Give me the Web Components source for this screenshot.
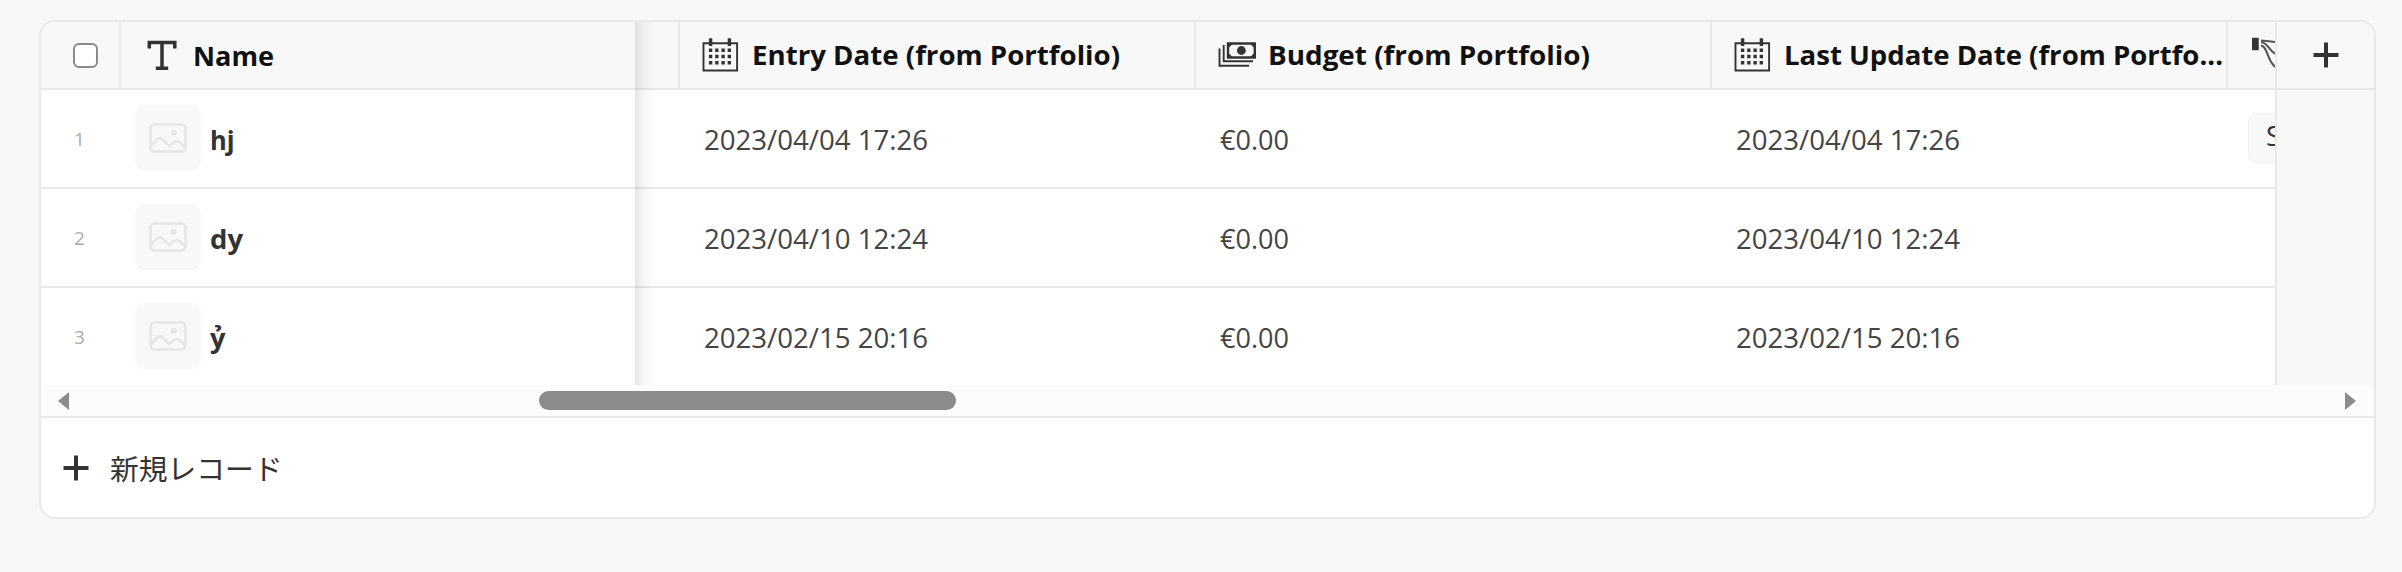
<!DOCTYPE html>
<html lang="ja"><head><meta charset="utf-8"><title>Records</title>
<style>
body{margin:0;width:2402px;height:572px;overflow:hidden;background:#f8f8f8;font-family:"Open Sans","Noto Sans","Noto Sans CJK JP",sans-serif;color:#333}
</style></head><body>
<data-grid></data-grid>
<script>
const ICONS={
text:'<svg width="38" height="36" viewBox="0 0 38 36"><path d="M6.300 11.500V5.400h25.500v6.100M19 5.400V31M12.800 31.200H25.200" fill="none" stroke="#333" stroke-width="3.500"/></svg>',
cal:'<svg width="38" height="36" viewBox="0 0 38 36"><path d="M1.500 6.300h33.600v27.200H1.500z" fill="none" stroke="#333" stroke-width="1.900"/><path d="M8.600 1.200v7.800M27.400 1.200v7.800" stroke="#333" stroke-width="3.400"/><path d="M6.900 13.200h24M6.900 19.500h24M6.900 25.800h24" stroke="#333" stroke-width="3.400" stroke-dasharray="3.400 2.850"/></svg>',
money:'<svg width="38" height="36" viewBox="0 0 38 36"><path d="M10 6.500h26.800v14H10z" fill="none" stroke="#333" stroke-width="2.400"/><path d="M9.500 6h6l-6 6zM37.300 6h-6l6 6zM9.500 21v-6l6 6zM37.300 21v-6l-6 6z" fill="#333"/><circle cx="23.400" cy="13.500" r="4.400" fill="#333"/><path d="M5.700 8v16.300H35M1.500 11.500v17.300H31" fill="none" stroke="#333" stroke-width="1.900"/></svg>',
lookup:'<svg width="38" height="36" viewBox="0 0 38 36"><path d="M2 .8h6.700v12.500H2z" fill="#333"/><path d="M11 3.500c5 .2 9 1.500 20 1.700M11 5.300c7 0 8 9 15 12M11 8.500c7 1 6 16 15 22" fill="none" stroke="#555" stroke-width="2.100"/></svg>',
plus:'<svg width="26" height="26" viewBox="0 0 26 26"><path d="M13 .5v25M.5 13h25" stroke="#333" stroke-width="4"/></svg>',
image:'<svg width="38" height="30" viewBox="0 0 38 30"><rect x="1.500" y="1.500" width="35" height="27" rx="4" fill="none" stroke="#e6e6e6" stroke-width="2.600"/><circle cx="24.700" cy="9.700" r="3" fill="#e6e6e6"/><path d="M2 23l6-6.500q3-2.500 6 .5l6.500 6 4.500-3.800q3-2 5.500 0l6 5.300" fill="none" stroke="#e6e6e6" stroke-width="2.600"/></svg>'};
class El extends HTMLElement{
 connectedCallback(){if(!this.shadowRoot){this.attachShadow({mode:'open'}).innerHTML=this.render()}this.ready&&this.ready()}
}
// Single-line label condensed or widened to the width of its column text.
customElements.define('fit-text',class extends El{
 render(){return `<style>:host{display:block;white-space:nowrap;width:${this.getAttribute('w')}px}span{display:inline-block;transform-origin:0 50%}</style><span><slot></slot></span>`}
 ready(){const s=this.shadowRoot.querySelector('span');s.style.transform=`scaleX(${this.getAttribute('w')/s.getBoundingClientRect().width})`}
});
customElements.define('grid-icon',class extends El{
 render(){return `<style>:host{display:block;flex:none}svg{display:block}</style>${ICONS[this.getAttribute('name')]}`}
});
customElements.define('head-cell',class extends El{
 render(){return `<style>:host{display:flex;align-items:center;box-sizing:border-box;height:66px;padding:0 0 0 22px;border-right:2px solid #e9e9e9;font:bold 27.500px/36px "Open Sans","Noto Sans",sans-serif;color:#111;overflow:hidden}grid-icon{margin-right:12px}</style><grid-icon name="${this.getAttribute('icon')}"></grid-icon><slot></slot>`}
});
customElements.define('value-cell',class extends El{
 render(){return `<style>:host{display:block;box-sizing:border-box;padding:32px 0 0 23.500px;font-size:27.500px;line-height:36px;color:#444}</style><slot></slot>`}
});
customElements.define('name-cell',class extends El{
 render(){return `<style>:host{display:flex;box-sizing:border-box;padding:15px 0 0 14px}.pic{width:66px;height:66px;border-radius:9px;background:#f8f8f8;display:grid;place-items:center}.pic grid-icon{margin-bottom:1px}b{margin:17px 0 0 9px;font-size:27.500px;line-height:36px;color:#333}</style><div class="pic"><grid-icon name="image"></grid-icon></div><b><slot></slot></b>`}
});
customElements.define('grid-scrollbar',class extends El{
 render(){return `<style>:host{display:flex;align-items:center;box-sizing:border-box;height:33px;padding:0 18px 0 17px;background:#fcfcfc;border-bottom:2px solid #e9e9e9}i{display:block;border:9.500px solid transparent;border-width:9.500px 0}.l{border-right:11px solid #8b8b8b}.r{border-left:11px solid #8b8b8b}.track{flex:1;padding-left:470px}.thumb{width:417px;height:19px;border-radius:10px;background:#8b8b8b}</style><i class="l"></i><div class="track"><div class="thumb"></div></div><i class="r"></i>`}
});
customElements.define('data-grid',class extends El{
 render(){const rows=[['hj','2023/04/04 17:26',24.5],['dy','2023/04/10 12:24',33],['ỷ','2023/02/15 20:16',15.5]];
 return `<style>
 :host{display:block;box-sizing:border-box;width:2337px;height:499px;margin:20px 0 0 39px;border:2px solid #e9e9e9;border-radius:16px;background:#fff;overflow:hidden}
 .body{display:flex;height:363px}
 .frozen{width:594px;flex:none}
 .view{position:relative;width:1640px;flex:none;overflow:hidden;border-right:2px solid #e9e9e9}
 .shade{position:absolute;inset:0 auto 0 0;width:22px;background:linear-gradient(90deg,rgba(0,0,0,.1),rgba(0,0,0,.045) 35%,rgba(0,0,0,.012) 70%,transparent)}
 .add{flex:1;background:#f8f8f8}
 .head{display:grid;background:#f8f8f8;border-bottom:2px solid #e9e9e9;height:66px;box-sizing:content-box}
 .row{display:grid;height:97px;border-bottom:2px solid #e9e9e9}.row:last-of-type{border-bottom:0}
 .frozen>*{grid-template-columns:80px 514px}
 .view>.head,.view>.row{grid-template-columns:45px 516px 516px 516px 300px}
 .check{border-right:2px solid #e9e9e9;padding:21px 0 0 32px;box-sizing:border-box}.check div{width:25px;height:25px;border:2px solid #8a8a8a;border-radius:6px;box-sizing:border-box;background:#fff}
 .title{display:flex;align-items:center;gap:12px;padding-left:22px;font-weight:bold;font-size:27.500px;color:#111}
 .num{font-size:19px;line-height:26px;color:#aaa;padding:36px 0 0 33px}
 .blank{border-right:2px solid #e9e9e9}
 .add .head{place-items:center}
 .chip{margin:23px 0 0 20px;width:180px;height:50px;box-sizing:border-box;border:1px solid #f1f1f1;background:#f8f8f8;border-radius:9px;padding:4px 17px;font-size:27.500px;line-height:36px;color:#333}
 .new{display:flex;align-items:center;gap:21px;padding-left:21.500px;height:99px;font:28.600px/40px "Noto Sans CJK JP",sans-serif;color:#333}
 </style>
 <div class="body"><div class="frozen"><div class="head"><div class="check"><div></div></div><div class="title"><grid-icon name="text"></grid-icon><fit-text w="81">Name</fit-text></div></div>
 ${rows.map((r,i)=>`<div class="row"><div class="num">${i+1}</div><name-cell><fit-text w="${r[2]}">${r[0]}</fit-text></name-cell></div>`).join('')}</div>
 <div class="view"><div class="head"><div class="blank"></div>
 <head-cell icon="cal"><fit-text w="368">Entry Date (from Portfolio)</fit-text></head-cell>
 <head-cell icon="money"><fit-text w="322">Budget (from Portfolio)</fit-text></head-cell>
 <head-cell icon="cal"><fit-text w="439">Last Update Date (from Portfo...</fit-text></head-cell>
 <head-cell icon="lookup"></head-cell></div>
 ${rows.map((r,i)=>`<div class="row"><div></div><value-cell><fit-text w="224">${r[1]}</fit-text></value-cell><value-cell><fit-text w="69">€0.00</fit-text></value-cell><value-cell><fit-text w="224">${r[1]}</fit-text></value-cell><div>${i?'':'<div class="chip">S</div>'}</div></div>`).join('')}
 <div class="shade"></div></div>
 <div class="add"><div class="head"><grid-icon name="plus"></grid-icon></div></div></div>
 <grid-scrollbar></grid-scrollbar>
 <div class="new"><grid-icon name="plus"></grid-icon><fit-text w="172.500">新規レコード</fit-text></div>`}
});
</script></body></html>
